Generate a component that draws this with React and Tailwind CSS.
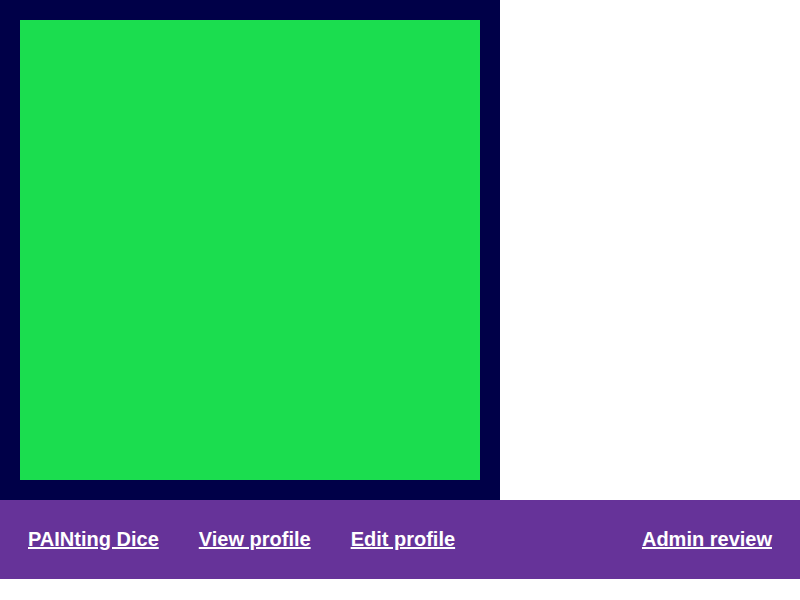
export default function App() {
  return (
    <div className="font-['Liberation_Sans',Arial,sans-serif]">
      <div className="w-[500px] h-[500px] bg-[#000048] p-5">
        <div className="w-full h-full bg-[#1bdd4f]" />
      </div>
      <nav className="flex items-center bg-[#663399] px-7 py-7 text-[20px] leading-[23px] font-bold text-white">
        <a href="#" className="underline mr-10">PAINting Dice</a>
        <a href="#" className="underline mr-10">View profile</a>
        <a href="#" className="underline">Edit profile</a>
        <a href="#" className="underline ml-auto">Admin review</a>
      </nav>
    </div>
  )
}
